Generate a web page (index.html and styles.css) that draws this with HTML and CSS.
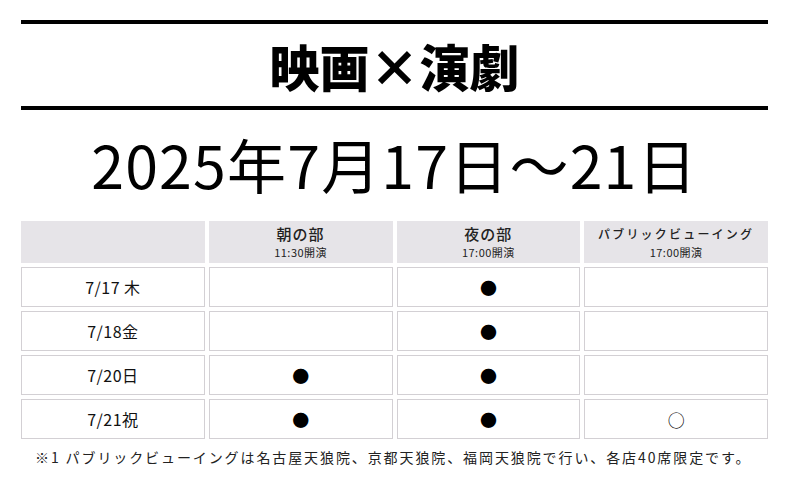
FILE: index.html
```html
<!DOCTYPE html>
<html lang="ja">
<head>
<meta charset="utf-8">
<link rel="stylesheet" href="styles.css">
</head>
<body>
<div class="page">
  <div class="rule"></div>
  <h1 class="title">映画×演劇</h1>
  <div class="rule"></div>
  <p class="date">2025年7月17日～21日</p>
  <div class="schedule">
    <div class="head blank"></div>
    <div class="head"><span class="name">朝の部</span><span class="time">11:30開演</span></div>
    <div class="head"><span class="name">夜の部</span><span class="time">17:00開演</span></div>
    <div class="head"><span class="name pv">パブリックビューイング</span><span class="time">17:00開演</span></div>

    <div class="cell day">7/17 木</div>
    <div class="cell"></div>
    <div class="cell"><span class="mark">●</span></div>
    <div class="cell"></div>

    <div class="cell day">7/18金</div>
    <div class="cell"></div>
    <div class="cell"><span class="mark">●</span></div>
    <div class="cell"></div>

    <div class="cell day">7/20日</div>
    <div class="cell"><span class="mark">●</span></div>
    <div class="cell"><span class="mark">●</span></div>
    <div class="cell"></div>

    <div class="cell day">7/21祝</div>
    <div class="cell"><span class="mark">●</span></div>
    <div class="cell"><span class="mark">●</span></div>
    <div class="cell"><span class="mark open">○</span></div>
  </div>
  <p class="note">※1 パブリックビューイングは名古屋天狼院、京都天狼院、福岡天狼院で行い、各店40席限定です。</p>
</div>
</body>
</html>
```

FILE: styles.css
```css
html, body {
  margin: 0;
  padding: 0;
  background: #ffffff;
}
body {
  font-family: "Noto Sans CJK JP", "Noto Sans", sans-serif;
  color: #111;
}
.page {
  width: 747px;
  margin-left: 21px;
  padding-top: 20px;
}
.rule {
  height: 4px;
  background: #000;
}
.title {
  margin: 0;
  height: 82px;
  line-height: 82px;
  text-align: center;
  font-size: 50px;
  font-weight: 900;
  color: #000;
}
.date {
  margin: 0;
  height: 111px;
  line-height: 108px;
  text-align: center;
  font-size: 59px;
  font-weight: 400;
  letter-spacing: 1.2px;
  color: #000;
}
.schedule {
  display: grid;
  grid-template-columns: repeat(4, 1fr);
  grid-template-rows: 42px repeat(4, 40px);
  column-gap: 4px;
  row-gap: 4px;
}
.head {
  background: #e6e4e8;
  display: flex;
  flex-direction: column;
  align-items: center;
  justify-content: center;
}
.name {
  font-size: 15px;
  font-weight: 500;
  line-height: 20px;
  letter-spacing: 1px;
  color: #222;
}
.name.pv {
  font-size: 12px;
  letter-spacing: 2.2px;
  font-weight: 500;
}
.time {
  font-size: 11px;
  line-height: 16px;
  letter-spacing: 0.5px;
  color: #222;
}
.cell {
  border: 1px solid #d3d0d4;
  display: flex;
  align-items: center;
  justify-content: center;
  font-size: 16px;
  color: #111;
}
.day {
  font-weight: 400;
  letter-spacing: 0.5px;
}
.mark {
  font-size: 17px;
  line-height: 1;
  color: #000;
}
.note {
  margin: 8px 0 0 14px;
  font-size: 14px;
  letter-spacing: 1.9px;
  color: #222;
  line-height: 20px;
}
```
